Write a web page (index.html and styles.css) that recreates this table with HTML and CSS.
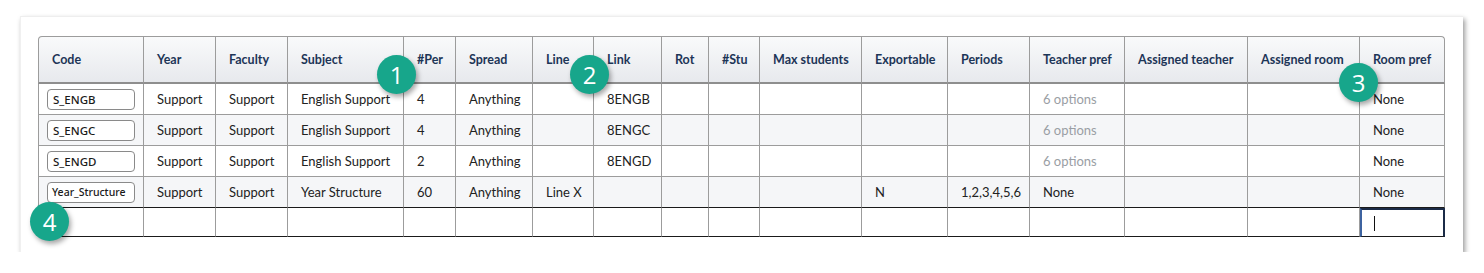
FILE: index.html
```html
<!DOCTYPE html>
<html lang="en">
<head>
<meta charset="utf-8">
<title>Classes grid</title>
<link rel="stylesheet" href="styles.css">
</head>
<body>
<div class="page">
  <div class="panel">
    <div class="grid-wrap">
      <table class="grid">
        <thead>
          <tr>
            <th class="c-code">Code</th>
            <th class="c-year">Year</th>
            <th class="c-fac">Faculty</th>
            <th class="c-subj">Subject</th>
            <th class="c-per">#Per</th>
            <th class="c-spread">Spread</th>
            <th class="c-line">Line</th>
            <th class="c-link">Link</th>
            <th class="c-rot">Rot</th>
            <th class="c-stu">#Stu</th>
            <th class="c-max">Max students</th>
            <th class="c-exp">Exportable</th>
            <th class="c-periods">Periods</th>
            <th class="c-tpref">Teacher pref</th>
            <th class="c-ateach">Assigned teacher</th>
            <th class="c-aroom">Assigned room</th>
            <th class="c-rpref">Room pref</th>
          </tr>
        </thead>
        <tbody>
          <tr>
            <td class="code"><span class="code-box">S_ENGB</span></td>
            <td>Support</td><td>Support</td><td>English Support</td><td>4</td><td>Anything</td><td></td><td>8ENGB</td>
            <td></td><td></td><td></td><td></td><td></td><td class="muted">6 options</td><td></td><td></td><td>None</td>
          </tr>
          <tr class="alt">
            <td class="code"><span class="code-box">S_ENGC</span></td>
            <td>Support</td><td>Support</td><td>English Support</td><td>4</td><td>Anything</td><td></td><td>8ENGC</td>
            <td></td><td></td><td></td><td></td><td></td><td class="muted">6 options</td><td></td><td></td><td>None</td>
          </tr>
          <tr>
            <td class="code"><span class="code-box">S_ENGD</span></td>
            <td>Support</td><td>Support</td><td>English Support</td><td>2</td><td>Anything</td><td></td><td>8ENGD</td>
            <td></td><td></td><td></td><td></td><td></td><td class="muted">6 options</td><td></td><td></td><td>None</td>
          </tr>
          <tr class="alt last-data">
            <td class="code"><span class="code-box small">Year_Structure</span></td>
            <td>Support</td><td>Support</td><td>Year Structure</td><td>60</td><td>Anything</td><td>Line X</td><td></td>
            <td></td><td></td><td></td><td>N</td><td>1,2,3,4,5,6</td><td>None</td><td></td><td></td><td>None</td>
          </tr>
          <tr class="new-row">
            <td></td><td></td><td></td><td></td><td></td><td></td><td></td><td></td>
            <td></td><td></td><td></td><td></td><td></td><td></td><td></td><td></td>
            <td class="editing"><span class="caret"></span></td>
          </tr>
        </tbody>
      </table>
      <span class="badge b1">1</span>
      <span class="badge b2">2</span>
      <span class="badge b3">3</span>
      <span class="badge b4">4</span>
    </div>
  </div>
</div>
</body>
</html>
```

FILE: styles.css
```css
* { box-sizing: border-box; }
html, body { margin: 0; padding: 0; background: #ffffff; }
body {
  font-family: Lato, "Noto Sans", "DejaVu Sans", sans-serif;
  font-size: 13px;
  color: #222;
}
.page {
  padding: 16px 21px 0 20px;
}
.panel {
  width: 1443px;
  height: 236px;
  background: #fff;
  border-top: 1px solid #eeeeee;
  border-left: 1px solid #f0f0f0;
  box-shadow: 2px 3px 5px rgba(0,0,0,0.4);
  padding: 19px 0 0 17px;
}
.grid-wrap {
  position: relative;
  width: 1407px;
}
.grid {
  table-layout: fixed;
  border-collapse: separate;
  border-spacing: 0;
  width: 1407px;
}
.grid th, .grid td {
  border-right: 1px solid #9c9c9c;
  border-bottom: 1px solid #9c9c9c;
  padding: 0 0 0 13px;
  text-align: left;
  white-space: nowrap;
  overflow: hidden;
  vertical-align: middle;
}
.grid th:first-child, .grid td:first-child { border-left: 1px solid #9c9c9c; }
.grid th {
  height: 48px;
  border-top: 1px solid #9c9c9c;
  border-bottom: 2px solid #8e8e8e;
  background: linear-gradient(#f9fafb, #e7e9ed);
  color: #1d3557;
  font-weight: 700;
  font-size: 12.5px;
}
.grid th:first-child { border-top-left-radius: 4px; }
.grid th:last-child { border-top-right-radius: 4px; }
.grid td { height: 31px; }
.grid tr.alt td { background: #f5f6f8; }
.grid tr.last-data td { height: 31px; border-bottom: 1px solid #1a1a1a; }
.grid tr.new-row td { height: 29px; border-bottom: 1px solid #1a1a1a; }
.grid td.muted { color: #9a9ea4; }

.c-code { width: 106px; }
.c-year { width: 72px; }
.c-fac { width: 72px; }
.c-subj { width: 116px; }
.c-per { width: 52px; }
.c-spread { width: 77px; }
.c-line { width: 61px; }
.c-link { width: 68px; }
.c-rot { width: 47px; }
.c-stu { width: 51px; }
.c-max { width: 102px; }
.c-exp { width: 86px; }
.c-periods { width: 82px; }
.c-tpref { width: 95px; }
.c-ateach { width: 123px; }
.c-aroom { width: 112px; }
.c-rpref { width: 85px; }

.grid td.code { padding-left: 8px; }
.code-box {
  display: flex;
  align-items: center;
  width: 88px;
  height: 21px;
  border: 1px solid #8a8a8a;
  border-radius: 4px;
  background: #fff;
  padding-left: 5px;
  font-family: "Noto Sans", "Open Sans", sans-serif;
  font-size: 11.5px;
  font-weight: 500;
  color: #1a1a1a;
}
.code-box.small { font-size: 10.5px; padding-left: 4px; }

.grid td.editing {
  padding: 0;
  border: 2px solid #1b2b47;
  border-left-color: #3d63a0;
  border-right-color: #1b2b47;
  background: #fff;
}
.caret {
  display: block;
  width: 1px;
  height: 15px;
  background: #111;
  margin-left: 12px;
}

.badge {
  position: absolute;
  width: 39px;
  height: 39px;
  border-radius: 50%;
  background: #17a68b;
  color: #fff;
  font-family: "Open Sans", "Noto Sans", sans-serif;
  font-size: 24px;
  line-height: 39px;
  text-align: center;
  box-shadow: 2px 3px 5px rgba(0,0,0,0.35);
}
.b1 { left: 339px; top: 19px; }
.b2 { left: 532px; top: 19px; }
.b3 { left: 1301px; top: 27px; }
.b4 { left: -8px; top: 166px; }
```
